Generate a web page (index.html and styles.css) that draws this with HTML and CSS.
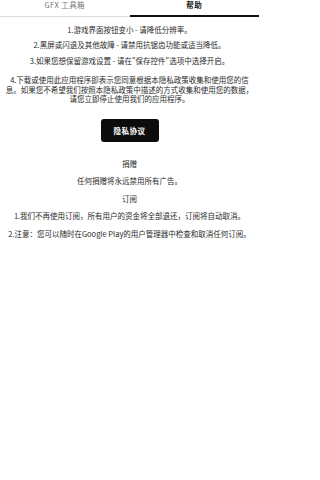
FILE: index.html
```html
<!DOCTYPE html>
<html lang="zh">
<head>
<meta charset="utf-8">
<meta name="viewport" content="width=device-width, initial-scale=1">
<link rel="stylesheet" href="styles.css">
</head>
<body>
<div class="app">
  <div class="tabs">
    <div class="tab"><span class="tab-label">GFX 工具箱</span></div>
    <div class="tab active"><span class="tab-label">帮助</span></div>
  </div>
  <main class="content">
    <p class="line l1">1.游戏界面按钮变小 - 请降低分辨率。</p>
    <p class="line l2">2.黑屏或闪退及其他故障 - 请禁用抗锯齿功能或适当降低。</p>
    <p class="line l3">3.如果您想保留游戏设置 - 请在"保存控件"选项中选择开启。</p>
    <p class="line l4">4.下载或使用此应用程序即表示您同意根据本隐私政策收集和使用您的信息。如果您不希望我们按照本隐私政策中描述的方式收集和使用您的数据，请您立即停止使用我们的应用程序。</p>
    <div class="btn-row"><button class="privacy-btn">隐私协议</button></div>
    <p class="line h1">捐赠</p>
    <p class="line l5">任何捐赠将永远禁用所有广告。</p>
    <p class="line h2">订阅</p>
    <p class="line l6">1.我们不再使用订阅，所有用户的资金将全部退还，订阅将自动取消。</p>
    <p class="line l7">2.注意：您可以随时在Google Play的用户管理器中检查和取消任何订阅。</p>
  </main>
</div>
</body>
</html>
```

FILE: styles.css
```css
html, body {
  margin: 0;
  padding: 0;
  background: #ffffff;
}

body {
  font-family: "Noto Sans CJK SC", "Noto Sans", sans-serif;
  font-size: 7.5px;
  color: #2a2a2a;
}

.app {
  width: 259px;
  min-height: 480px;
}

.tabs {
  display: flex;
  height: 17px;
  box-shadow: inset 0 -1px 0 #dcdcdc;
}

.tab {
  flex: 1;
  display: flex;
  justify-content: center;
  align-items: flex-start;
}

.tab-label {
  line-height: 9px;
  font-size: 7.5px;
  color: #777777;
  letter-spacing: 0.4px;
}

.tab.active {
  box-shadow: inset 0 -2px 0 #111111;
}

.tab.active .tab-label {
  color: #111111;
  font-weight: 700;
}

.content {
  padding: 0 5px;
  text-align: center;
}

.line {
  margin: 0;
  line-height: 9.7px;
}

.l1 { margin-top: 8px; }
.l2 { margin-top: 5.3px; }
.l3 { margin-top: 6.3px; }
.l4 { margin-top: 9.3px; }

.btn-row {
  display: flex;
  justify-content: center;
  margin-top: 15px;
}

.privacy-btn {
  width: 58px;
  height: 23px;
  border: none;
  border-radius: 3px;
  background: #0c0c0c;
  color: #ffffff;
  font-family: "Noto Sans CJK SC", "Noto Sans", sans-serif;
  font-size: 7.5px;
  font-weight: 700;
  letter-spacing: 0.5px;
  padding: 0;
}

.h1 { margin-top: 17px; }
.l5 { margin-top: 7.3px; }
.h2 { margin-top: 8.3px; }
.l6 { margin-top: 7.3px; }
.l7 { margin-top: 8.3px; }
```
